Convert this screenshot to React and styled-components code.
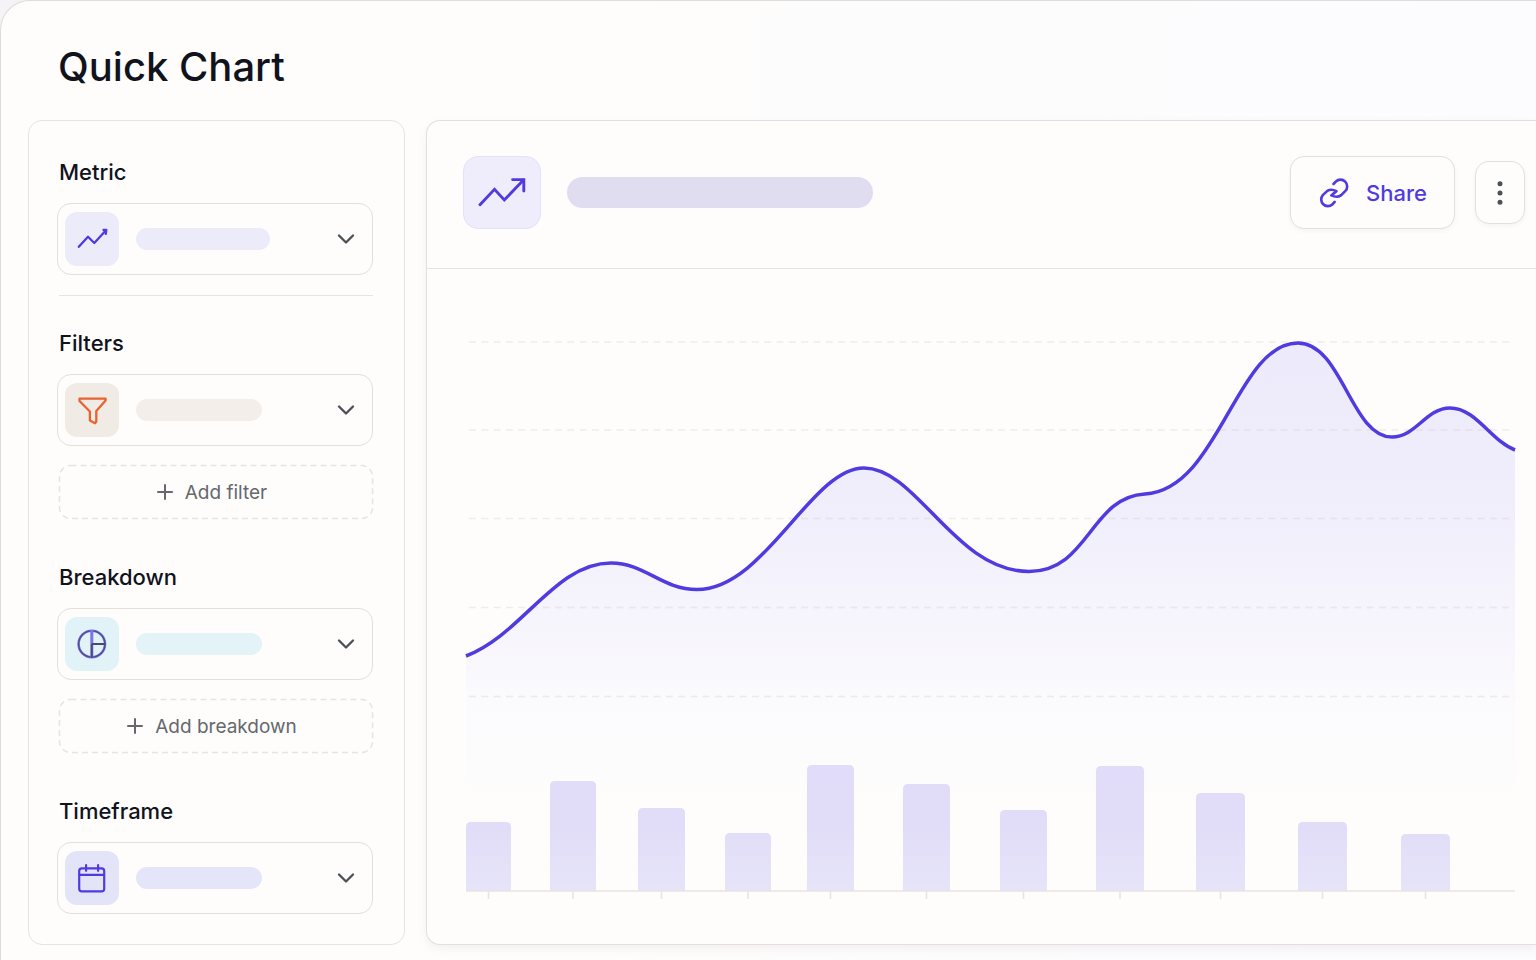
import React from 'react';
import styled, { createGlobalStyle } from 'styled-components';
import { ChevronDown, EllipsisVertical, Plus } from 'lucide-react';

const GlobalStyle = createGlobalStyle`
  * {
    box-sizing: border-box;
  }

  body {
    margin: 0;
    background: #f5f3f8;
    font-family: Inter, 'Liberation Sans', sans-serif;
    color: #10131c;
  }

  button, select {
    font-family: inherit;
    cursor: pointer;
  }
`;

const Window = styled.main`
  min-height: 100vh;
  padding: 0 0 15px 27px;
  border: solid #e2dbd7;
  border-width: 1px 0 0 1px;
  border-radius: 30px 0 0 0;
  background: linear-gradient(90deg, #fefdfc 40%, #fcfbfe 100%);
`;

const Title = styled.h1`
  margin: 0;
  padding: 42px 30px 29px;
  font-size: 40px;
  line-height: 48px;
  font-weight: 500;
`;

const Columns = styled.div`
  display: grid;
  grid-template-columns: 377px minmax(0, 1fr);
  gap: 21px;
  align-items: stretch;
`;

const Sidebar = styled.aside`
  padding: 35px 31px 30px 28px;
  border: 1px solid #e9e2de;
  border-radius: 14px;
  background: #fefdfc;
`;

const Section = styled.section`
  display: flex;
  flex-direction: column;

  & + & {
    margin-top: 42px;
  }
`;

const Divider = styled.hr`
  margin: 20px 0 31px 2px;
  border: 0;
  border-top: 1px solid #e9e2de;
`;

const Label = styled.label`
  margin: 0 0 15px 2px;
  font-size: 22px;
  line-height: 32px;
  font-weight: 500;
`;

// the select and its face share one grid cell
const Field = styled.div`
  display: grid;
  height: 72px;

  & > * {
    grid-area: 1 / 1;
  }
`;

const Select = styled.select`
  appearance: none;
  width: 100%;
  margin: 0;
  border: 1px solid #e6deda;
  border-radius: 14px;
  background: #fefdfc;
`;

const Face = styled.span`
  display: flex;
  align-items: center;
  padding: 0 13px 0 8px;
  color: #4b5057;
  pointer-events: none;

  & > :last-child {
    margin-left: auto;
  }
`;

const Tile = styled.span`
  display: block;
  flex: none;
  width: 54px;
  height: 54px;
  border-radius: 12px;
  background: ${({ $color }) => $color};

  svg {
    display: block;
  }
`;

const Skeleton = styled.span`
  width: ${({ $width }) => $width}px;
  height: 22px;
  margin-left: 17px;
  border-radius: 11px;
  background: ${({ $color }) => $color};
`;

const AddButton = styled.button`
  display: grid;
  grid-template-columns: minmax(0, 1fr);
  height: 54px;
  margin: 19px 0 0 2px;
  padding: 0;
  border: 0;
  border-radius: 12px;
  background: none;
  color: #65686d;
  font-size: 19px;

  & > * {
    grid-area: 1 / 1;
  }
`;

const AddText = styled.span`
  display: flex;
  align-items: center;
  justify-content: center;
  gap: 8px;
  padding-right: 12px;
`;

const DashedBox = styled.svg`
  width: 100%;
  height: 54px;
  overflow: visible;
`;

const Card = styled.section`
  border: solid #e6deda;
  border-width: 1px 0 1px 1px;
  border-radius: 14px 0 0 14px;
  background: #fefdfc;
  box-shadow: 0 4px 10px rgba(120, 90, 110, 0.08);
`;

const CardHeader = styled.header`
  display: flex;
  align-items: center;
  height: 148px;
  padding: 0 11px 4px 36px;
  border-bottom: 1px solid #e9e2de;
`;

const ChartTile = styled.span`
  width: 78px;
  height: 73px;
  border: 1px solid #e4e1fa;
  border-radius: 15px;
  background: #efedfb;

  svg {
    display: block;
  }
`;

const ChartName = styled.span`
  width: 306px;
  height: 31px;
  margin: 0 auto 0 26px;
  border-radius: 16px;
  background: #e0ddf1;
`;

const HeaderButton = styled.button`
  display: flex;
  align-items: center;
  justify-content: center;
  padding: 0;
  border: 1px solid #e6deda;
  border-radius: 14px;
  background: #fefdfc;
  box-shadow: 0 2px 4px rgba(70, 60, 120, 0.05);
`;

const ShareButton = styled(HeaderButton)`
  gap: 16px;
  width: 165px;
  height: 73px;
  margin-right: 20px;
  color: #4f3be0;
  font-size: 22px;
  font-weight: 500;
`;

const MoreButton = styled(HeaderButton)`
  width: 50px;
  height: 63px;
  color: #4b5057;
`;

const ChartArea = styled.div`
  padding: 61px 21px 38px 39px;

  svg {
    display: block;
    width: 100%;
    height: auto;
    overflow: visible;
  }
`;

const INDIGO = '#4f3be0';

function TrendIcon() {
  return (
    <svg width="54" height="54" fill="none" stroke={INDIGO} strokeWidth="2.3" strokeLinecap="round" strokeLinejoin="round" aria-hidden="true">
      <path d="M13.8 34.8 L23 24.8 L29.3 31 L41 18.2" />
      <path d="M38.5 18 H41.3 L40.8 21.8" />
    </svg>
  );
}

function FunnelIcon() {
  return (
    <svg width="54" height="54" fill="none" stroke="#e8632f" strokeWidth="2.3" strokeLinejoin="round" aria-hidden="true">
      <path d="M14.5 15.7 H40.6 V17.6 L31.3 28 V38.5 L30 40.2 L24.9 37.6 V28.5 L14.5 18 Z" />
    </svg>
  );
}

function PieIcon() {
  return (
    <svg width="54" height="54" fill="none" aria-hidden="true">
      <circle cx="26.8" cy="27" r="13.2" stroke="#7b74e6" strokeWidth="2.6" />
      <circle cx="26.8" cy="27" r="13.2" stroke="#4f4d8c" strokeWidth="1.3" />
      <path d="M26.8 13 V41" stroke="#7b74e6" strokeWidth="3" />
      <path d="M26.8 27 V41 M26.8 27 H40.4" stroke="#4a4a70" strokeWidth="1.8" />
    </svg>
  );
}

function CalendarIcon() {
  return (
    <svg width="54" height="54" fill="none" stroke={INDIGO} strokeWidth="2.2" strokeLinecap="round" aria-hidden="true">
      <rect x="14.2" y="17.4" width="25" height="23" rx="2.6" />
      <path d="M14.5 23.9 H39 M21.1 14.2 V19.8 M33.1 14.2 V19.8" />
    </svg>
  );
}

function BigTrendIcon() {
  return (
    <svg width="76" height="71" fill="none" stroke={INDIGO} strokeWidth="2.9" strokeLinecap="round" strokeLinejoin="miter" aria-hidden="true">
      <path d="M16 47.8 L30.5 32.3 L40.3 43 L59.5 23" />
      <path d="M48.6 22.6 H59.8 V34" />
    </svg>
  );
}

function LinkIcon() {
  return (
    <svg width="32" height="32" viewBox="0 0 24 24" fill="none" stroke="currentColor" strokeWidth="2" strokeLinecap="round" strokeLinejoin="round" aria-hidden="true">
      <path d="M11.6 5.2 L13.3 3.5 A5 5 0 0 1 20.4 10.6 L17.4 13.6 Q14.4 15.9 10 13.8 L13.8 10.6 Q10 8.6 7 10.4 L3.6 13.6 A5 5 0 0 0 10.7 20.6 L12.5 18.7" />
    </svg>
  );
}

function Picker({ id, label, icon, tile, bar, barWidth = 126 }) {
  return (
    <>
      <Label htmlFor={id}>{label}</Label>
      <Field>
        <Select id={id}>
          <option value="" />
        </Select>
        <Face>
          <Tile $color={tile}>{icon}</Tile>
          <Skeleton $color={bar} $width={barWidth} />
          <ChevronDown size={28} />
        </Face>
      </Field>
    </>
  );
}

function Add({ children }) {
  return (
    <AddButton type="button">
      <DashedBox aria-hidden="true">
        <rect x="0.5" y="0.5" width="99.7%" height="53" rx="11" fill="none" stroke="#ebe2de" strokeWidth="1.5" strokeDasharray="6 4" />
      </DashedBox>
      <AddText>
        <Plus size={24} />
        {children}
      </AddText>
    </AddButton>
  );
}

const bars = [
  { x: 0, width: 45, height: 69 },
  { x: 84, width: 46, height: 110 },
  { x: 172, width: 47, height: 83 },
  { x: 259, width: 46, height: 58 },
  { x: 341, width: 47, height: 126 },
  { x: 437, width: 47, height: 107 },
  { x: 534, width: 47, height: 81 },
  { x: 630, width: 48, height: 125 },
  { x: 730, width: 49, height: 98 },
  { x: 832, width: 49, height: 69 },
  { x: 935, width: 49, height: 57 },
];

const gridLines = [12, 100, 188.5, 277.5, 366.5];

const BASE = 561;

const curve =
  'M0 326 C57 304 89 233 145 233 C179 233 196 259.5 231 259.5 C299 259.5 345 138 398 138 ' +
  'C451 138 489 241.5 563 241.5 C623 241.5 624 167 679 164 C753 160 770 13 832 13 ' +
  'C876 13 885 107 926 107 C950 107 960 78 984 78 C1010 78 1025 111 1049 120';

const barPath = ({ x, width, height }) =>
  `M${x} ${BASE} v${5 - height} q0 -5 5 -5 h${width - 10} q5 0 5 5 v${height - 5} z`;

function Chart() {
  return (
    <svg viewBox="0 0 1049 575" role="img" aria-label="Chart">
      <defs>
        <linearGradient id="area" gradientUnits="userSpaceOnUse" x1="0" y1="13" x2="0" y2="470">
          <stop offset="0" stopColor="#edebfb" />
          <stop offset="0.35" stopColor="#f0eefb" />
          <stop offset="0.55" stopColor="#f5f3fc" />
          <stop offset="0.78" stopColor="#fbfafd" />
          <stop offset="1" stopColor="#fefdfc" />
        </linearGradient>
        <linearGradient id="bar" gradientUnits="userSpaceOnUse" x1="0" y1="435" x2="0" y2="561">
          <stop offset="0" stopColor="#e1dcf9" />
          <stop offset="0.5" stopColor="#e1ddf8" />
          <stop offset="1" stopColor="#e6e4f9" />
        </linearGradient>
      </defs>
      <path d={`${curve} V470 H0 Z`} fill="url(#area)" />
      {gridLines.map((y) => (
        <path key={y} d={`M3 ${y} H1049`} stroke="#d8bdb5" strokeOpacity="0.28" strokeWidth="1.4" strokeDasharray="7 5.3" />
      ))}
      <path d={curve} fill="none" stroke={INDIGO} strokeWidth="3.5" />
      {bars.map((bar) => (
        <path key={bar.x} d={barPath(bar)} fill="url(#bar)" />
      ))}
      <path d={`M0 ${BASE} H1049`} stroke="#eae3e0" strokeWidth="1.6" />
      {bars.map(({ x, width }) => (
        <path key={x} d={`M${x + width / 2} ${BASE} v8`} stroke="#eae3e0" strokeWidth="1.6" />
      ))}
    </svg>
  );
}

function App() {
  return (
    <>
      <GlobalStyle />
      <Window>
        <Title>Quick Chart</Title>
        <Columns>
          <Sidebar>
            <Section as="div">
              <Picker id="metric" label="Metric" icon={<TrendIcon />} tile="#ecebfa" bar="#ecebfa" barWidth={134} />
            </Section>
            <Divider />
            <Section>
              <Picker id="filters" label="Filters" icon={<FunnelIcon />} tile="#f1ebe6" bar="#f4eeea" />
              <Add>Add filter</Add>
            </Section>
            <Section>
              <Picker id="breakdown" label="Breakdown" icon={<PieIcon />} tile="#e2f3f8" bar="#e3f3f7" />
              <Add>Add breakdown</Add>
            </Section>
            <Section>
              <Picker id="timeframe" label="Timeframe" icon={<CalendarIcon />} tile="#e4e4f9" bar="#e4e5f8" />
            </Section>
          </Sidebar>
          <Card>
            <CardHeader>
              <ChartTile>
                <BigTrendIcon />
              </ChartTile>
              <ChartName />
              <ShareButton type="button">
                <LinkIcon />
                Share
              </ShareButton>
              <MoreButton type="button" aria-label="More options">
                <EllipsisVertical size={32} strokeWidth={1.75} />
              </MoreButton>
            </CardHeader>
            <ChartArea>
              <Chart />
            </ChartArea>
          </Card>
        </Columns>
      </Window>
    </>
  );
}

export default App;
